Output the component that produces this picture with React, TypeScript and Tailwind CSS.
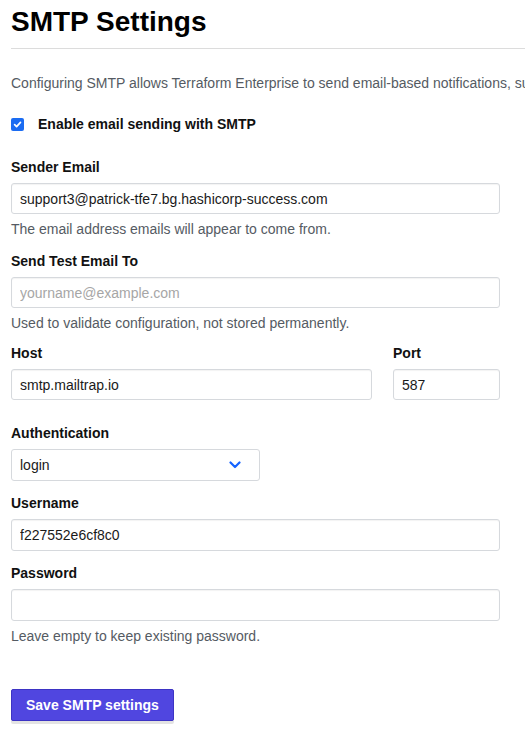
import React from 'react';

const font = { fontFamily: '"Liberation Sans", Arial, Helvetica, sans-serif' };

function Label({ children }: { children: React.ReactNode }) {
  return <label className="block text-[14px] leading-5 font-bold text-[#111] mb-[6px]">{children}</label>;
}

function Help({ children }: { children: React.ReactNode }) {
  return <p className="text-[14px] leading-5 text-[#555b63] mt-[5px]">{children}</p>;
}

function TextInput({ value, placeholder, className = '' }: { value?: string; placeholder?: string; className?: string }) {
  return (
    <input
      type="text"
      defaultValue={value}
      placeholder={placeholder}
      className={`block h-[31px] w-full border border-[#d6d9dd] rounded-[3px] bg-white px-[8px] text-[14px] text-[#1a1a1a] placeholder:text-[#a6a6a6] shadow-[inset_0_1px_1px_rgba(0,0,0,0.05)] outline-none ${className}`}
    />
  );
}

export default function App() {
  return (
    <div className="w-full min-h-screen overflow-hidden bg-white pl-[11px]" style={font}>
      {/* Header */}
      <div className="border-b border-[#dcdcdc] pt-[5px] pb-[10px]">
        <h1 className="text-[28px] leading-[33px] font-bold text-black">SMTP Settings</h1>
      </div>

      <p className="mt-[24px] text-[14px] leading-5 text-[#555b63] whitespace-nowrap">
        Configuring SMTP allows Terraform Enterprise to send email-based notifications, such as password resets and team invitations.
      </p>

      {/* Enable checkbox */}
      <div className="mt-[21px] flex items-center h-5">
        <span className="w-[13px] h-[13px] rounded-[2px] bg-[#1b6cf2] flex items-center justify-center">
          <svg width="9" height="9" viewBox="0 0 10 10" fill="none">
            <path d="M1.8 5.2L4 7.3L8.3 2.6" stroke="white" strokeWidth="1.9" strokeLinecap="round" strokeLinejoin="round" />
          </svg>
        </span>
        <span className="ml-[14px] text-[14px] font-bold text-[#111]">Enable email sending with SMTP</span>
      </div>

      <form className="w-[489px] mt-[23px]" onSubmit={(e) => e.preventDefault()}>
        <div>
          <Label>Sender Email</Label>
          <TextInput value="support3@patrick-tfe7.bg.hashicorp-success.com" />
          <Help>The email address emails will appear to come from.</Help>
        </div>

        <div className="mt-[12px]">
          <Label>Send Test Email To</Label>
          <TextInput placeholder="yourname@example.com" />
          <Help>Used to validate configuration, not stored permanently.</Help>
        </div>

        <div className="mt-[10px] flex gap-[21px]">
          <div className="flex-1">
            <Label>Host</Label>
            <TextInput value="smtp.mailtrap.io" />
          </div>
          <div className="w-[107px]">
            <Label>Port</Label>
            <TextInput value="587" />
          </div>
        </div>

        <div className="mt-[23px]">
          <Label>Authentication</Label>
          <div className="w-[249px] h-[32px] border border-[#d6d9dd] rounded-[3px] bg-white px-[8px] flex items-center justify-between">
            <span className="text-[14px] text-[#1a1a1a]">login</span>
            <svg width="12" height="8" viewBox="0 0 12 8" fill="none" className="mr-[10px]">
              <path d="M1.5 1.5L6 6L10.5 1.5" stroke="#1563ff" strokeWidth="2.2" strokeLinecap="round" strokeLinejoin="round" />
            </svg>
          </div>
        </div>

        <div className="mt-[12px]">
          <Label>Username</Label>
          <TextInput value="f227552e6cf8c0" className="h-[32px]" />
        </div>

        <div className="mt-[12px]">
          <Label>Password</Label>
          <TextInput className="h-[32px]" />
          <Help>Leave empty to keep existing password.</Help>
        </div>

        <button
          type="submit"
          className="mt-[43px] h-[32px] px-[14px] bg-[#5046e0] border border-[#3d34c4] rounded-[2px] text-white text-[14px] font-bold shadow-[0_3px_0_#e3e3e3]"
        >
          Save SMTP settings
        </button>
      </form>
    </div>
  );
}
